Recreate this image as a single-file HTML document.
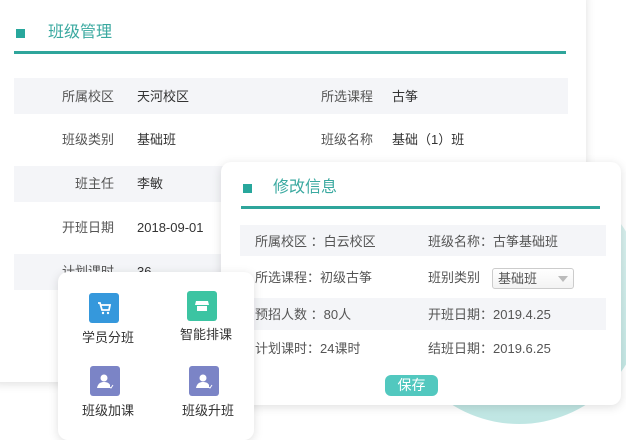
<!DOCTYPE html>
<html><head><meta charset="utf-8"><style>
*{margin:0;padding:0;box-sizing:border-box}
body{width:626px;height:440px;overflow:hidden;background:#fff;position:relative;font-family:"Liberation Sans","Noto Sans CJK SC",sans-serif;font-size:13px;color:#444}
.circle{position:absolute;left:393px;top:172px;width:252px;height:252px;border-radius:50%;background:linear-gradient(180deg,#dff3f1,#bfe6e3)}
.card{position:absolute;background:#fff;border-radius:10px;box-shadow:0 2px 10px rgba(0,0,0,.13)}
.sq{position:absolute;width:9px;height:9px;background:#28a79c}
.ttl{position:absolute;font-size:16px;color:#3aa9a0;line-height:20px}
.ln{position:absolute;height:3px;background:#2fa59b}
.t{position:absolute;line-height:16px;white-space:nowrap}
.g{position:absolute;background:#f4f5f8}
.ic{position:absolute;width:30px;height:30px;border-radius:3px}
</style></head><body>
<div class="circle"></div>
<div class="card" style="left:-10px;top:-12px;width:596px;height:394px"></div>
<div class="sq" style="left:16px;top:29px"></div>
<div class="ttl" style="left:48px;top:23px">班级管理</div>
<div class="ln" style="left:14px;top:51px;width:552px"></div>
<div class="g" style="left:14px;top:78px;width:554px;height:36px"></div>
<div class="g" style="left:14px;top:166px;width:554px;height:36px"></div>
<div class="g" style="left:14px;top:254px;width:554px;height:36px"></div>
<div class="t" style="right:512px;top:89px;color:#555">所属校区</div><div class="t" style="left:137px;top:89px;color:#333">天河校区</div>
<div class="t" style="right:253px;top:89px;color:#555">所选课程</div><div class="t" style="left:392px;top:89px;color:#333">古筝</div>
<div class="t" style="right:512px;top:132px;color:#555">班级类别</div><div class="t" style="left:137px;top:132px;color:#333">基础班</div>
<div class="t" style="right:253px;top:132px;color:#555">班级名称</div><div class="t" style="left:392px;top:132px;color:#333">基础（1）班</div>
<div class="t" style="right:512px;top:176px;color:#555">班主任</div><div class="t" style="left:137px;top:176px;color:#333">李敏</div>
<div class="t" style="right:512px;top:220px;color:#555">开班日期</div><div class="t" style="left:137px;top:220px;color:#333">2018-09-01</div>
<div class="t" style="right:512px;top:264px;color:#555">计划课时</div><div class="t" style="left:137px;top:264px;color:#333">36</div>

<div class="card" style="left:221px;top:162px;width:400px;height:243px"></div>
<div class="sq" style="left:243px;top:184px"></div>
<div class="ttl" style="left:273px;top:178px">修改信息</div>
<div class="ln" style="left:241px;top:206px;width:359px"></div>
<div class="g" style="left:240px;top:225px;width:366px;height:31px"></div>
<div class="g" style="left:240px;top:298px;width:366px;height:32px"></div>
<div class="t" style="left:255px;top:234px;color:#555">所属校区 ：白云校区</div>
<div class="t" style="left:428px;top:234px;color:#555">班级名称：古筝基础班</div>
<div class="t" style="left:255px;top:270px;color:#555">所选课程：初级古筝</div>
<div class="t" style="left:428px;top:270px;color:#555">班别类别</div>
<div style="position:absolute;left:492px;top:268px;width:82px;height:21px;border:1px solid #ccc;border-radius:3px;background:linear-gradient(#fff,#f3f3f3)"><span class="t" style="left:5px;top:2px;color:#555">基础班</span><span style="position:absolute;right:5px;top:7px;border:5px solid transparent;border-top:6px solid #bbb"></span></div>
<div class="t" style="left:255px;top:307px;color:#555">预招人数 ：80人</div>
<div class="t" style="left:428px;top:307px;color:#555">开班日期：2019.4.25</div>
<div class="t" style="left:255px;top:341px;color:#555">计划课时：24课时</div>
<div class="t" style="left:428px;top:341px;color:#555">结班日期：2019.6.25</div>
<div style="position:absolute;left:385px;top:375px;width:53px;height:21px;border-radius:6px;background:#52c8bf;color:#fff;font-size:14px;text-align:center;line-height:21px">保存</div>

<div class="card" style="left:58px;top:272px;width:196px;height:168px"></div>
<div class="ic" style="left:89px;top:293px;background:#3598dc"><svg width="30" height="30" viewBox="0 0 30 30"><path d="M9 10h2l2 7h7l1-5h-9" fill="none" stroke="#fff" stroke-width="1.8"/><circle cx="14" cy="20" r="1.2" fill="#fff"/><circle cx="19" cy="20" r="1.2" fill="#fff"/></svg></div>
<div class="ic" style="left:187px;top:291px;background:#3cc4a2"><svg width="30" height="30" viewBox="0 0 30 30"><path d="M9 10h12l1 4H8z" fill="#fff"/><path d="M10 15h10v5H10z" fill="#fff"/></svg></div>
<div class="ic" style="left:90px;top:366px;background:#7b84c6"><svg width="30" height="30" viewBox="0 0 30 30"><circle cx="14" cy="12" r="3.5" fill="#fff"/><path d="M7 22c1-5 4-6 7-6s5 1 6 3v3z" fill="#fff"/><path d="M19 21l2 1 2-3" stroke="#fff" fill="none"/></svg></div>
<div class="ic" style="left:189px;top:366px;background:#7b84c6"><svg width="30" height="30" viewBox="0 0 30 30"><circle cx="14" cy="12" r="3.5" fill="#fff"/><path d="M7 22c1-5 4-6 7-6s5 1 6 3v3z" fill="#fff"/><path d="M19 21l2 1 2-3" stroke="#fff" fill="none"/></svg></div>
<div class="t" style="left:82px;top:330px;color:#333">学员分班</div>
<div class="t" style="left:180px;top:327px;color:#333">智能排课</div>
<div class="t" style="left:82px;top:403px;color:#333">班级加课</div>
<div class="t" style="left:182px;top:403px;color:#333">班级升班</div>
</body></html>
